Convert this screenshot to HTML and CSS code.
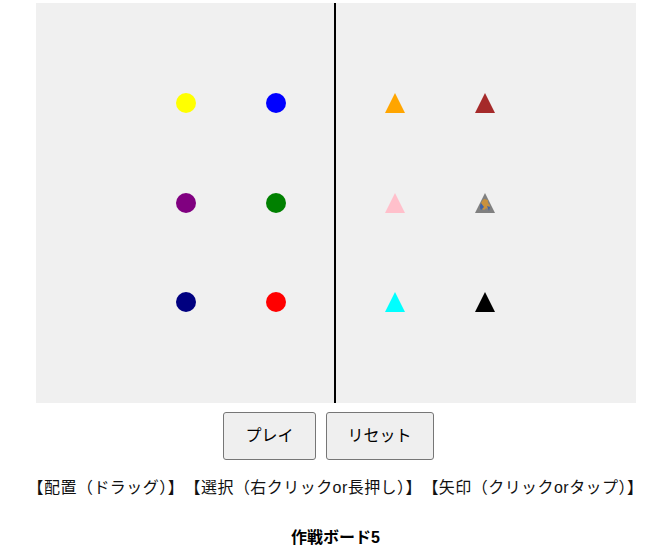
FILE: index.html
```html
<!DOCTYPE html>
<html lang="ja">
<head>
<meta charset="utf-8">
<title>作戦ボード5</title>
<link rel="stylesheet" href="styles.css">
</head>
<body>
<main class="page">
  <svg class="board" width="600" height="400" viewBox="0 0 600 400">
    <rect x="0" y="0" width="600" height="400" fill="#f0f0f0"/>
    <line x1="299" y1="0" x2="299" y2="400" stroke="#000" stroke-width="2"/>
    <circle cx="150" cy="100" r="10" fill="yellow"/>
    <circle cx="240" cy="100" r="10" fill="blue"/>
    <circle cx="150" cy="200" r="10" fill="purple"/>
    <circle cx="240" cy="200" r="10" fill="green"/>
    <circle cx="150" cy="299" r="10" fill="navy"/>
    <circle cx="240" cy="299" r="10" fill="red"/>
    <polygon points="359,90 349,110 369,110" fill="orange"/>
    <polygon points="449,90 439,110 459,110" fill="brown"/>
    <polygon points="359,190 349,210 369,210" fill="pink"/>
    <polygon points="449,190 439,210 459,210" fill="gray"/>
    <path d="M448,196 q-4,3 -3,9 l3,2 q2,-3 5,-1 l1,-4 q-3,-2 -2,-5 z" fill="#c8913e"/>
    <path d="M445,200 q-2,4 0,7 l3,-3 z" fill="#3f63a8"/>
    <path d="M451,203 l3,1 l-1,4 z" fill="#3f63a8"/>
    <polygon points="359,289 349,309 369,309" fill="cyan"/>
    <polygon points="449,289 439,309 459,309" fill="#000"/>
  </svg>
  <div class="controls">
    <button class="btn" type="button">プレイ</button>
    <button class="btn" type="button">リセット</button>
  </div>
  <p class="help">【配置（ドラッグ）】　【選択（右クリックor長押し）】　【矢印（クリックorタップ）】</p>
  <p class="title">作戦ボード5</p>
</main>
</body>
</html>
```

FILE: styles.css
```css
html, body {
  margin: 0;
  padding: 0;
  background: #fff;
}

body {
  font-family: "Liberation Sans", "Noto Sans CJK JP", sans-serif;
  font-size: 16px;
  color: #000;
}

.page {
  display: flex;
  flex-direction: column;
  align-items: center;
  padding: 3px 0 0 3px;
}

.board {
  display: block;
}

.controls {
  display: flex;
  gap: 10px;
  margin-top: 9px;
  margin-right: 14px;
}

.btn {
  font-family: "Liberation Sans", "Noto Sans CJK JP", sans-serif;
  font-size: 16px;
  line-height: 22px;
  padding: 12px 21px;
  background: #efefef;
  color: #000;
  border: 1px solid #767676;
  border-radius: 3px;
}

.help {
  margin: 16px 0 0 0;
  line-height: 24px;
  white-space: nowrap;
  letter-spacing: 0.45px;
  color: #111;
}

.title {
  margin: 26px 0 0 0;
  font-weight: bold;
  line-height: 24px;
}
```
